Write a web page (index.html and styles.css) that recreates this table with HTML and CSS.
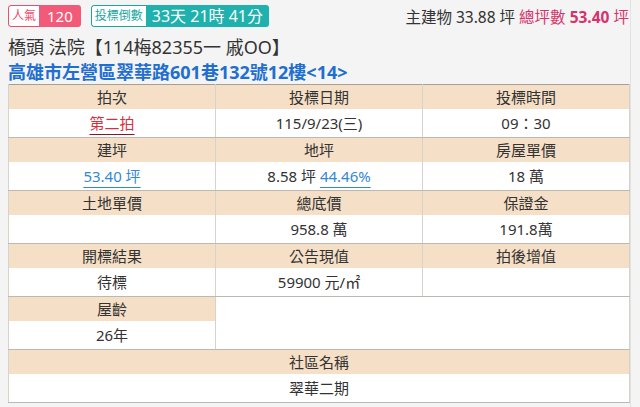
FILE: index.html
```html
<!DOCTYPE html>
<html lang="zh-Hant">
<head>
<meta charset="utf-8">
<link rel="stylesheet" href="styles.css">
</head>
<body>
<div class="page">
  <div class="topbar">
    <div class="badges">
      <span class="badge pink"><span class="lbl">人氣</span><span class="num">120</span></span>
      <span class="badge teal"><span class="lbl">投標倒數</span><span class="num">33天 21時 41分</span></span>
    </div>
    <div class="area">主建物 33.88 坪 <span class="total">總坪數 <b>53.40</b> 坪</span></div>
  </div>
  <div class="title">橋頭 法院【114梅82355一 戚OO】</div>
  <div class="addr">高雄市左營區翠華路601巷132號12樓&lt;14&gt;</div>
  <table class="info">
    <tr class="hd"><th>拍次</th><th>投標日期</th><th>投標時間</th></tr>
    <tr class="val"><td><a class="red">第二拍</a></td><td>115/9/23(三)</td><td>09：30</td></tr>
    <tr class="hd"><th>建坪</th><th>地坪</th><th>房屋單價</th></tr>
    <tr class="val"><td><a class="blue">53.40 坪</a></td><td>8.58 坪 <a class="blue">44.46%</a></td><td>18 萬</td></tr>
    <tr class="hd"><th>土地單價</th><th>總底價</th><th>保證金</th></tr>
    <tr class="val"><td></td><td>958.8 萬</td><td>191.8萬</td></tr>
    <tr class="hd"><th>開標結果</th><th>公告現值</th><th>拍後增值</th></tr>
    <tr class="val"><td>待標</td><td>59900 元/㎡</td><td></td></tr>
    <tr class="hd"><th>屋齡</th><td class="blank" colspan="2" rowspan="2"></td></tr>
    <tr class="val"><td>26年</td></tr>
    <tr class="hd"><th colspan="3">社區名稱</th></tr>
    <tr class="val"><td colspan="3">翠華二期</td></tr>
  </table>
</div>
</body>
</html>
```

FILE: styles.css
```css
html, body {
  margin: 0;
  padding: 0;
  background: #f4f4f4;
}
body {
  font-family: "Noto Sans", "Noto Sans CJK TC", sans-serif;
  color: #333;
}
.page {
  width: 622px;
  padding: 5px 0 0 8px;
  border-right: 1px solid #e2e2e2;
  height: 402px;
}
.topbar {
  display: flex;
  justify-content: space-between;
  align-items: center;
  height: 22px;
}
.badges {
  display: flex;
  gap: 10px;
}
.badge {
  display: flex;
  height: 22px;
  border-radius: 3px;
  overflow: hidden;
  box-sizing: border-box;
}
.badge .lbl {
  background: #fff;
  font-size: 12px;
  line-height: 20px;
  padding: 0 3px;
  border: 1px solid;
  border-right: 0;
  border-radius: 3px 0 0 3px;
}
.badge .num {
  color: #fff;
  font-size: 15px;
  line-height: 22px;
  padding: 0 8px;
}
.pink .lbl { color: #ee4d6e; border-color: #ee4d6e; }
.pink .num { background: #f25a7a; }
.teal .lbl { color: #1aa7a4; border-color: #1aa7a4; }
.teal .num { background: #1fb1ae; font-size: 16px; padding: 0 6px; }
.area {
  font-size: 15.5px;
  color: #333;
  padding-right: 1px;
}
.area .total { color: #d6336c; }
.area b { font-weight: 700; }
.title {
  margin-top: 8px;
  font-size: 18px;
  line-height: 24px;
  color: #333;
}
.addr {
  font-size: 18px;
  line-height: 24px;
  font-weight: 700;
  color: #1f6fd1;
  margin-top: 1px;
}
.info {
  margin-top: 0;
  width: 622px;
  border-collapse: collapse;
  table-layout: fixed;
  background: #fff;
  border: 1px solid #a79f93;
  font-size: 15px;
}
.info th, .info td {
  text-align: center;
  padding: 0;
  border-left: 1px solid #d8d2ca;
  border-right: 1px solid #d8d2ca;
}
.info th {
  font-weight: normal;
  background: #f5dfc6;
  height: 24px;
  line-height: 24px;
}
.info .val td {
  height: 28px;
  line-height: 28px;
  border-bottom: 1px solid #bdb8b2;
}
.info td.blank {
  background: #fff;
  border-bottom: 1px solid #bdb8b2;
}
.red {
  color: #d9303e;
  text-decoration: underline;
  text-decoration-color: #7a1a22;
  text-underline-offset: 5px;
}
.blue {
  color: #3388d4;
  text-decoration: underline;
  text-underline-offset: 5px;
}
```
